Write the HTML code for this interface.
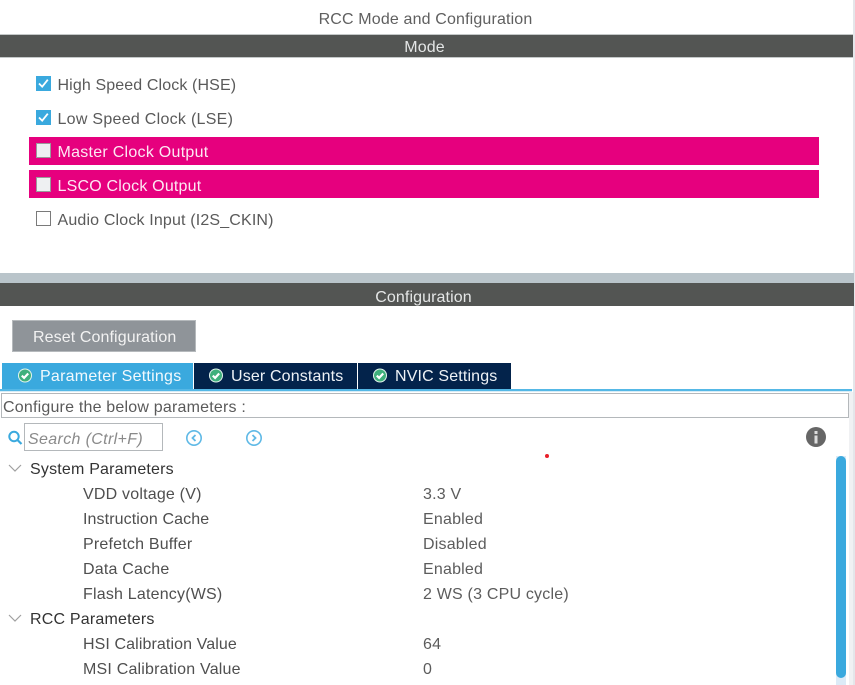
<!DOCTYPE html>
<html><head><meta charset="utf-8">
<style>
html,body{margin:0;padding:0;background:#fff}
body{width:855px;height:685px;position:relative;overflow:hidden;font-family:"Liberation Sans",sans-serif;font-size:16px;color:#5a5a5a}
.w{position:absolute;left:0;top:0;width:855px;height:685px;filter:blur(.35px)}
.a{position:absolute;white-space:nowrap}
.t{position:absolute;white-space:nowrap;line-height:20px;height:20px;letter-spacing:.2px}
.k{color:#4f4f4f;left:83px}
.v{color:#5c5c5c;left:423px}
.h{color:#333;left:30px}
.cb{position:absolute;left:36px;width:15px;height:15px;box-sizing:border-box}
</style></head><body><div class="w">
<div class="t" style="left:0;width:851px;top:10px;text-align:center;color:#5f5f5f;letter-spacing:.15px">RCC Mode and Configuration</div>
<div class="a" style="left:0;top:34px;width:854px;height:24px;background:#535553;border-top:1px solid #c4c8c8;border-bottom:1px solid #c4c8c8;box-sizing:border-box"></div>
<div class="t" style="left:0;width:849px;top:38px;text-align:center;color:#e4e6e6;letter-spacing:.1px">Mode</div>
<div class="a" style="left:853px;top:0;width:2px;height:685px;background:#e4e6ea"></div>

<div class="cb" style="top:76px;background:#3aa9de"></div>
<svg class="a" style="left:36px;top:76px" width="15" height="15"><path d="M3 7.5l3.2 3.2 5.6-7" fill="none" stroke="#fff" stroke-width="1.8"/></svg>
<div class="t" style="left:57.5px;top:76px;letter-spacing:.12px">High Speed Clock (HSE)</div>
<div class="cb" style="top:110px;background:#3aa9de"></div>
<svg class="a" style="left:36px;top:110px" width="15" height="15"><path d="M3 7.5l3.2 3.2 5.6-7" fill="none" stroke="#fff" stroke-width="1.8"/></svg>
<div class="t" style="left:57.5px;top:110px;letter-spacing:.28px">Low Speed Clock (LSE)</div>

<div class="a" style="left:29px;top:137px;width:790px;height:28px;background:#e6007e"></div>
<div class="a" style="left:29px;top:170px;width:790px;height:28px;background:#e6007e"></div>
<div class="cb" style="top:143px;background:#eef0f2;border:1.5px solid #9a9a9a"></div>
<div class="t" style="left:57.5px;top:143px;color:#fde8f3;letter-spacing:.27px">Master Clock Output</div>
<div class="cb" style="top:177px;background:#eef0f2;border:1.5px solid #9a9a9a"></div>
<div class="t" style="left:57.5px;top:177px;color:#fde8f3">LSCO Clock Output</div>
<div class="cb" style="top:211px;background:#fff;border:1.5px solid #7a7a7a"></div>
<div class="t" style="left:57.5px;top:211px;letter-spacing:.16px">Audio Clock Input (I2S_CKIN)</div>

<div class="a" style="left:0;top:273px;width:854px;height:10px;background:#b9c4ca"></div>
<div class="a" style="left:0;top:283px;width:854px;height:23px;background:#535553"></div>
<div class="t" style="left:0;width:847px;top:288px;text-align:center;color:#e4e6e6;letter-spacing:.1px">Configuration</div>

<div class="a" style="left:12px;top:320px;width:184px;height:32px;background:#8f9499;box-sizing:border-box;border:1px solid #b5b9bc"></div>
<div class="t" style="left:33px;top:328px;color:#f2f2f2;letter-spacing:.1px">Reset Configuration</div>

<div class="a" style="left:2px;top:363px;width:191px;height:26px;background:#3aa9de"></div>
<div class="a" style="left:194px;top:363px;width:163px;height:26px;background:#03234b"></div>
<div class="a" style="left:358px;top:363px;width:153px;height:26px;background:#03234b"></div>
<svg class="a" style="left:17px;top:367.5px" width="16" height="16"><circle cx="8" cy="7.5" r="7" fill="#e4f4ed"/><circle cx="8" cy="7.5" r="6" fill="#3fb07c"/><path d="M4.8 7.6l2.3 2.3 4.1-4.4" fill="none" stroke="#fff" stroke-width="2.2"/></svg>
<div class="t" style="left:40px;top:367px;color:#f2f9fd;letter-spacing:.25px">Parameter Settings</div>
<svg class="a" style="left:208px;top:367.5px" width="16" height="16"><circle cx="8" cy="7.5" r="7" fill="#e4f4ed"/><circle cx="8" cy="7.5" r="6" fill="#3fb07c"/><path d="M4.8 7.6l2.3 2.3 4.1-4.4" fill="none" stroke="#fff" stroke-width="2.2"/></svg>
<div class="t" style="left:231px;top:367px;color:#eef2f6;letter-spacing:.15px">User Constants</div>
<svg class="a" style="left:372px;top:367.5px" width="16" height="16"><circle cx="8" cy="7.5" r="7" fill="#e4f4ed"/><circle cx="8" cy="7.5" r="6" fill="#3fb07c"/><path d="M4.8 7.6l2.3 2.3 4.1-4.4" fill="none" stroke="#fff" stroke-width="2.2"/></svg>
<div class="t" style="left:395px;top:367px;color:#eef2f6;letter-spacing:.15px">NVIC Settings</div>

<div class="a" style="left:0;top:389px;width:852px;height:2px;background:#55b8e6"></div>
<div class="a" style="left:0;top:391px;width:852px;height:1px;background:#d5ecf7"></div>
<div class="a" style="left:1px;top:393px;width:848px;height:25px;box-sizing:border-box;border:1px solid #b4b8bb;background:#fff"></div>
<div class="t" style="left:3px;top:398px">Configure the below parameters :</div>

<svg class="a" style="left:7px;top:430px" width="16" height="16"><circle cx="7" cy="6.5" r="4.7" fill="none" stroke="#3aa9de" stroke-width="2"/><path d="M10.5 10l4 4" stroke="#3aa9de" stroke-width="2.2"/></svg>
<div class="a" style="left:24px;top:423px;width:139px;height:28px;box-sizing:border-box;border:1px solid #b4b8bb"></div>
<div class="t" style="left:28px;top:430px;font-style:italic;color:#8a8a8a;letter-spacing:.35px">Search (Ctrl+F)</div>
<svg class="a" style="left:185px;top:428.5px" width="18" height="18"><circle cx="9" cy="9" r="7.2" fill="none" stroke="#5fb9e6" stroke-width="1.6"/><path d="M10.5 6L7.5 9l3 3" fill="none" stroke="#5fb9e6" stroke-width="1.8"/></svg>
<svg class="a" style="left:244.5px;top:428.5px" width="18" height="18"><circle cx="9" cy="9" r="7.2" fill="none" stroke="#5fb9e6" stroke-width="1.6"/><path d="M7.5 6l3 3-3 3" fill="none" stroke="#5fb9e6" stroke-width="1.8"/></svg>
<svg class="a" style="left:806px;top:427px" width="20" height="20"><circle cx="10" cy="10" r="10" fill="#666"/><rect x="8.5" y="8.5" width="3" height="8" fill="#ddd"/><rect x="8.5" y="4" width="3" height="3" fill="#ddd"/></svg>
<div class="a" style="left:545px;top:454px;width:4px;height:4px;border-radius:50%;background:#e8202a"></div>

<div class="a" style="left:836px;top:456px;width:10px;height:229px;background:#dcebf7"></div>
<div class="a" style="left:836px;top:456px;width:10px;height:222px;border-radius:5px;background:#3aa9de"></div>
<div class="a" style="left:849px;top:392px;width:4px;height:293px;background:#f0f1f3"></div>

<svg class="a" style="left:7px;top:463px" width="16" height="12"><path d="M2 2l6 6 6-6" fill="none" stroke="#a0a0a0" stroke-width="1.2"/></svg>
<div class="t h" style="top:460px">System Parameters</div>
<div class="t k" style="top:485px">VDD voltage (V)</div><div class="t v" style="top:485px">3.3 V</div>
<div class="t k" style="top:510px;letter-spacing:.1px">Instruction Cache</div><div class="t v" style="top:510px">Enabled</div>
<div class="t k" style="top:535px">Prefetch Buffer</div><div class="t v" style="top:535px">Disabled</div>
<div class="t k" style="top:560px">Data Cache</div><div class="t v" style="top:560px">Enabled</div>
<div class="t k" style="top:585px">Flash Latency(WS)</div><div class="t v" style="top:585px">2 WS (3 CPU cycle)</div>
<svg class="a" style="left:7px;top:613px" width="16" height="12"><path d="M2 2l6 6 6-6" fill="none" stroke="#a0a0a0" stroke-width="1.2"/></svg>
<div class="t h" style="top:610px">RCC Parameters</div>
<div class="t k" style="top:635px;letter-spacing:.1px">HSI Calibration Value</div><div class="t v" style="top:635px">64</div>
<div class="t k" style="top:660px">MSI Calibration Value</div><div class="t v" style="top:660px">0</div>
</div></body></html>
